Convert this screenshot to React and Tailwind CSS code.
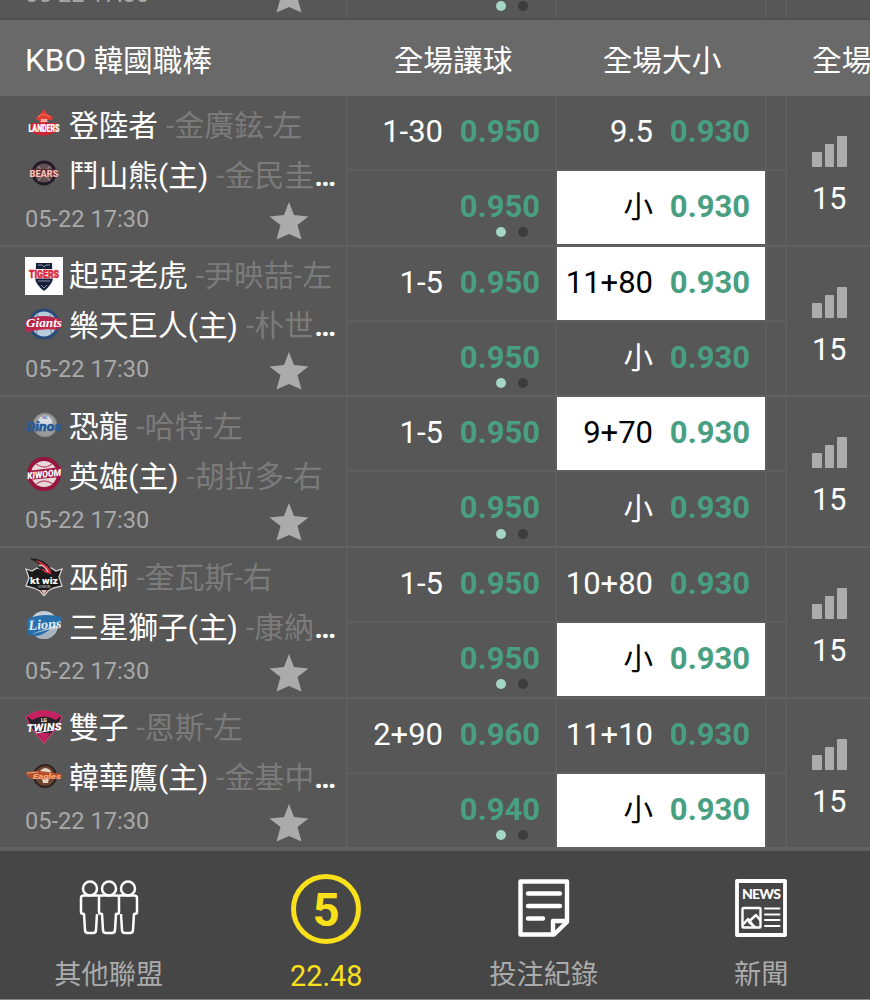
const games = [
    {
        away: { logo: LandersLogo, name: '登陸者', pitcher: '-金廣鉉-左' },
        home: { logo: BearsLogo, name: '鬥山熊(主)', pitcher: '-金民圭', more: true },
        spread: ['1-30', '0.950', '0.950'],
        total: ['9.5', '0.930', '0.930'],
        active: 'under'
    },
    {
        away: { logo: TigersLogo, name: '起亞老虎', pitcher: '-尹映喆-左' },
        home: { logo: GiantsLogo, name: '樂天巨人(主)', pitcher: '-朴世', more: true },
        spread: ['1-5', '0.950', '0.950'],
        total: ['11+80', '0.930', '0.930'],
        active: 'over'
    },
    {
        away: { logo: DinosLogo, name: '恐龍', pitcher: '-哈特-左' },
        home: { logo: KiwoomLogo, name: '英雄(主)', pitcher: '-胡拉多-右' },
        spread: ['1-5', '0.950', '0.950'],
        total: ['9+70', '0.930', '0.930'],
        active: 'over'
    },
    {
        away: { logo: WizLogo, name: '巫師', pitcher: '-奎瓦斯-右' },
        home: { logo: LionsLogo, name: '三星獅子(主)', pitcher: '-康納', more: true },
        spread: ['1-5', '0.950', '0.950'],
        total: ['10+80', '0.930', '0.930'],
        active: 'under'
    },
    {
        away: { logo: TwinsLogo, name: '雙子', pitcher: '-恩斯-左' },
        home: { logo: EaglesLogo, name: '韓華鷹(主)', pitcher: '-金基中', more: true },
        spread: ['2+90', '0.960', '0.940'],
        total: ['11+10', '0.930', '0.930'],
        active: 'under'
    }
];

const logoProps = { width: 38, height: 38, viewBox: '0 0 38 38', className: 'shrink-0' };

function LandersLogo() {
    return (
        <svg {...logoProps}>
            <path d="M10 13 Q14 10 16 7 L19 3 L21 7 L28 11 L27 14 L22 14 L21 18 H15 L14 14Z" fill="#e23b31" />
            <path d="M13 11 Q18 6 25 11" stroke="#f07d50" strokeWidth="1.2" fill="none" />
            <path d="M6 17 H32 V26 L26 28 Q19 31 11 28 L6 26Z" fill="#cf2434" />
            <text x="19" y="16" textAnchor="middle" fontSize="3.5" fontWeight="700" fill="#fff">SSG</text>
            <text x="19" y="26" textAnchor="middle" textLength="31" lengthAdjust="spacingAndGlyphs" fontSize="10" fontWeight="900" fill="#fff" stroke="#fff" strokeWidth=".2">LANDERS</text>
        </svg>
    );
}

function BearsLogo() {
    return (
        <svg {...logoProps}>
            <circle cx="19" cy="17" r="11" fill="#5f5053" stroke="#231a27" strokeWidth="3" />
            <path d="M13 10 L25 25 M25 10 L13 25" stroke="#8d7779" strokeWidth="1.5" />
            <rect x="5" y="13" width="28" height="8" fill="#5a3038" />
            <text x="19" y="20.5" textAnchor="middle" textLength="29" lengthAdjust="spacingAndGlyphs" fontSize="9.5" fontWeight="900" fill="#f7bdb6">BEARS</text>
        </svg>
    );
}

function TigersLogo() {
    return (
        <svg {...logoProps}>
            <rect width="38" height="38" fill="#fff" />
            <path d="M11 6 H27 V9 L28 20 Q28 27 19 34 Q10 27 10 20 L11 9Z" fill="#15213b" />
            <path d="M13 8 H17 L19 10 L21 8 H25" stroke="#8b92a5" fill="none" />
            <rect x="3" y="12" width="32" height="9.5" fill="#fff" />
            <text x="19" y="20.5" textAnchor="middle" textLength="30" lengthAdjust="spacingAndGlyphs" fontSize="10" fontWeight="900" fill="#dc2439" stroke="#dc2439" strokeWidth=".4">TIGERS</text>
            <path d="M13 24 H25 M16 28 L19 31 L22 28" stroke="#8b92a5" fill="none" />
        </svg>
    );
}

function GiantsLogo() {
    return (
        <svg {...logoProps}>
            <circle cx="19" cy="17" r="14" fill="#b7cbdd" stroke="#284b78" strokeWidth="3" />
            <path d="M12 6 Q16 17 11 27 M26 6 Q22 17 27 27" stroke="#73849c" fill="none" />
            <path d="M1 13 Q18 5 37 13 L36 21 Q18 20 1 25Z" fill="#b5234a" />
            <text x="19" y="20" textAnchor="middle" textLength="36" lengthAdjust="spacingAndGlyphs" fontFamily="Liberation Serif" fontStyle="italic" fontSize="13.5" fontWeight="700" fill="#fff">Giants</text>
            <path d="M2 24 Q19 20 32 22" stroke="#c52a4e" strokeWidth="2" fill="none" />
        </svg>
    );
}

function DinosLogo() {
    return (
        <svg {...logoProps}>
            <circle cx="20" cy="18" r="12" fill="#9c9b9b" stroke="#7f7d7b" />
            <circle cx="20" cy="16" r="7.5" fill="#d8dbdf" />
            <text x="20" y="11.5" textAnchor="middle" fontSize="4" fontWeight="700" fill="#4874a5">NC</text>
            <text x="19" y="23.5" textAnchor="middle" textLength="35" lengthAdjust="spacingAndGlyphs" fontStyle="italic" fontSize="13" fontWeight="900" fill="#2a5a97" stroke="#2a5a97" strokeWidth=".5">Dinos</text>
        </svg>
    );
}

function KiwoomLogo() {
    return (
        <svg {...logoProps}>
            <circle cx="19" cy="17" r="15" fill="#e7d8dd" stroke="#97143c" strokeWidth="4" />
            <path d="M11 7 Q20 13 27 7 M11 27 Q19 21 28 27" stroke="#c46078" fill="none" strokeWidth="1.5" />
            <path d="M2 14 L36 10 V20 L3 23Z" fill="#a31542" />
            <text x="19" y="20.5" transform="rotate(-6 19 17)" textAnchor="middle" textLength="34" lengthAdjust="spacingAndGlyphs" fontStyle="italic" fontSize="9.5" fontWeight="900" fill="#fff">KIWOOM</text>
        </svg>
    );
}

function WizLogo() {
    return (
        <svg {...logoProps}>
            <path d="M1 11 L7 13 L12 10 L19 12 L26 10 L31 13 L37 11 L34 19 L37 28 L28 30 L23 33 L19 38 L15 33 L9 30 L1 28 L4 20Z" fill="#19181b" stroke="#d5d1cf" strokeWidth="1.3" />
            <path d="M6 1 Q19 1 26 12 L27 17 L20 15 L13 9 L19 11 Q14 4 6 1Z" fill="#dc3040" stroke="#202022" strokeWidth="1.3" />
            <path d="M14 7 Q20 7 23 14" stroke="#fff" fill="none" />
            <text x="19" y="25.5" textAnchor="middle" textLength="28" lengthAdjust="spacingAndGlyphs" fontSize="9" fontWeight="900" fill="#fff">kt wiz</text>
            <text x="19" y="30" textAnchor="middle" fontSize="3.5" fill="#ddd">SUWON</text>
            <path d="M16 32 H22 L19 37Z" fill="#e7b2af" />
        </svg>
    );
}

function LionsLogo() {
    return (
        <svg {...logoProps}>
            <circle cx="19" cy="17" r="14" fill="#c5ced6" />
            <path d="M11 28 Q22 26 32 18 Q30 31 19 31Z" fill="#a5b1bd" />
            <path d="M2 11 Q18 4 37 9 L35 17 Q28 17 24 20 L3 27Z" fill="#2870ad" />
            <text x="20" y="21" textAnchor="middle" textLength="33" lengthAdjust="spacingAndGlyphs" transform="rotate(-4 19 17)" fontFamily="Liberation Serif" fontStyle="italic" fontSize="14" fontWeight="700" fill="#e3f1fa">Lions</text>
            <path d="M3 27 L26 21 Q18 27 12 28Z" fill="#2870ad" />
        </svg>
    );
}

function TwinsLogo() {
    return (
        <svg {...logoProps}>
            <path d="M1 8 Q19 -4 37 8 L32 18 L19 34 L6 19Z" fill="#282229" stroke="#d23b73" strokeWidth="1.3" />
            <path d="M2 7 Q19 -4 36 7 L31 11 Q19 4 7 11Z" fill="#c72060" />
            <path d="M12 24 H25 L19 33Z" fill="#c72060" />
            <text x="19" y="13" textAnchor="middle" fontSize="5" fontWeight="700" fill="#fff">LG</text>
            <text x="19" y="22" transform="rotate(-3 19 18)" textAnchor="middle" textLength="35" lengthAdjust="spacingAndGlyphs" fontStyle="italic" fontSize="10.5" fontWeight="900" fill="#fff">TWINS</text>
            <path d="M11 24 L28 21" stroke="#fff" />
        </svg>
    );
}

function EaglesLogo() {
    return (
        <svg {...logoProps}>
            <circle cx="20" cy="17" r="11" fill="#70432f" stroke="#2d2524" strokeWidth="2" />
            <path d="M15 12 Q20 6 26 12 L25 15 L23 24 H18 L16 16Z" fill="#e3d5c6" />
            <path d="M1 13 L15 12 L37 15 L35 20 L7 20 L2 17Z" fill="#b54f2c" />
            <path d="M2 14 L13 13" stroke="#eca184" />
            <text x="22" y="19.5" textAnchor="middle" textLength="28" lengthAdjust="spacingAndGlyphs" fontStyle="italic" fontSize="8" fontWeight="900" fill="#f5a679">Eagles</text>
        </svg>
    );
}

function Star() {
    return (
        <svg width="40" height="38" viewBox="0 0 40 38" className="shrink-0">
            <path d="M20 0 L25 13 L39.5 14.5 L28.5 23 L32.5 37.5 L20 32 L7.5 37.5 L11.5 23 L.5 14.5 L15 13Z" fill="#ababab" />
        </svg>
    );
}

function Dots() {
    return (
        <div className="absolute right-[27px] bottom-[7.5px] flex gap-3">
            <span className="size-[10px] rounded-full bg-[#a5d6c5]" />
            <span className="size-[10px] rounded-full bg-[#3c3c3c]" />
        </div>
    );
}

function Team({ team }) {
    const Logo = team.logo;
    return (
        <div className="flex h-[50px] items-center whitespace-nowrap">
            <Logo />
            <span className="ml-1.5 pt-px">{team.name}</span>
            <span className="ml-2 pt-px tracking-[.2px] text-[#7b7b7b]">{team.pitcher}</span>
            {team.more && <span className="pt-px font-bold">…</span>}
        </div>
    );
}

function Odds({ label, value, active }) {
    return (
        <div className={`flex h-[73px] items-center justify-end pr-[15px] pb-[2px] text-[31px] ${active ? 'bg-white text-black' : ''}`}>
            {label === '小' ? <span className="pt-[3px] text-[29.5px]">{label}</span> : <span>{label}</span>}
            <span className="ml-4 w-[81px] text-right font-bold text-[#489f82]">{value}</span>
        </div>
    );
}

function Game({ game }) {
    return (
        <div className="grid h-[150.7px] shrink-0 grid-cols-[346px_211px_208px_22px_1fr] border-b-2 border-[#616161]">
            <div className="pt-1 pl-[25px]">
                <Team team={game.away} />
                <Team team={game.home} />
                <div className="flex h-9 items-center text-[23.6px] text-[#a9a9a9]">
                    <span className="w-[244px] pt-[3px]">05-22 17:30</span>
                    <div className="pt-[5px]"><Star /></div>
                </div>
            </div>
            <div className="relative border-x-2 border-[#5e5e5e]">
                <Odds label={game.spread[0]} value={game.spread[1]} />
                <div className="h-[2px] bg-[#5e5e5e]" />
                <Odds value={game.spread[2]} />
                <Dots />
            </div>
            <div>
                <Odds label={game.total[0]} value={game.total[1]} active={game.active === 'over'} />
                <div className="h-[2px] bg-[#5e5e5e]" />
                <Odds label="小" value={game.total[2]} active={game.active === 'under'} />
            </div>
            <div className="border-x-2 border-[#5e5e5e] pt-[73px]">
                <div className="h-[2px] bg-[#5e5e5e]" />
            </div>
            <div className="pt-[40px] pl-[25px]">
                <div className="flex items-end gap-[3px]">
                    <span className="h-[15px] w-[9.5px] rounded-[1px] bg-[#acacac]" />
                    <span className="h-[23px] w-[9.5px] rounded-[1px] bg-[#acacac]" />
                    <span className="h-[31px] w-[9.5px] rounded-[1px] bg-[#acacac]" />
                </div>
                <p className="mt-3 text-[30.5px] leading-[40px]">15</p>
            </div>
        </div>
    );
}

// bottom strip of the game that is scrolled under the league header
function PreviousGame() {
    return (
        <div className="flex h-5 flex-col justify-end overflow-hidden border-b-2 border-[#505050]">
            <div className="grid h-[150px] shrink-0 grid-cols-[346px_211px_208px_22px_1fr]">
                <div className="flex items-end pl-[25px] text-[23.6px] text-[#a9a9a9]">
                    <span className="w-[244px] pb-[11px]">05-22 17:30</span>
                    <div className="pb-[5px]"><Star /></div>
                </div>
                <div className="relative border-x-2 border-[#5e5e5e]">
                    <Dots />
                </div>
                <div />
                <div className="border-x-2 border-[#5e5e5e]" />
                <div />
            </div>
        </div>
    );
}

function LeaguesIcon() {
    return (
        <svg width="60" height="56" viewBox="0 0 60 56" fill="none" stroke="#fff" strokeWidth="2.5" strokeLinejoin="round">
            <circle cx="11" cy="8.5" r="7" />
            <circle cx="30" cy="8.5" r="7" />
            <circle cx="49" cy="8.5" r="7" />
            <path d="M20 15.5 H5 Q2 15.5 2 18 V32 Q2 34 5 34 L6 50 Q6 53 9 53 H14 Q17 53 17 50 L18 34" />
            <path d="M22 15.5 H38 Q40 15.5 40 18 V32 Q40 34 37 34 L36 50 Q36 53 33 53 H27 Q24 53 24 50 L23 34 Q20 34 20 32 V18 Q20 15.5 22 15.5Z" />
            <path d="M40 15.5 H55 Q58 15.5 58 18 V32 Q58 34 55 34 L54 50 Q54 53 51 53 H46 Q43 53 43 50 L42 34" />
        </svg>
    );
}

function RecordIcon() {
    return (
        <svg width="52" height="58" viewBox="0 0 52 58" fill="none" stroke="#fff" strokeWidth="4.4" strokeLinejoin="round" strokeLinecap="round">
            <path d="M2.5 2.5 H49 V43 L36 55.5 H2.5Z" />
            <path d="M35 55 V42 H48" />
            <path d="M10 14.5 H42 M10 27 H42 M10 39.5 H25" />
        </svg>
    );
}

function NewsIcon() {
    return (
        <svg width="52" height="58" viewBox="0 0 52 58" fill="none" stroke="#fff" strokeWidth="2.4" strokeLinejoin="round" strokeLinecap="round">
            <rect x="2" y="2" width="48" height="54" strokeWidth="3.8" />
            <text x="26.5" y="20" textAnchor="middle" textLength="39" fontFamily="Lato" fontSize="14" fontWeight="900" fill="#fff" stroke="none">NEWS</text>
            <rect x="7.5" y="29" width="18" height="19.5" rx="1" />
            <path d="M8.5 45 L13 40 L17 45 M14.5 42 L21 36 L25 41 M14 43 L20 48" />
            <path d="M30 29.5 H44.5 M30 35.5 H44.5 M30 41 H44.5 M30 47 H44.5" strokeWidth="2" />
        </svg>
    );
}

function NavItem({ label, children, active }) {
    return (
        <div className={`flex flex-col items-center ${active ? 'text-[28.8px] text-[#f9e01b]' : 'text-[27.2px] text-[#ababab]'}`}>
            <div className="mt-[22px] flex h-[70px] items-center justify-center">{children}</div>
            <span className={active ? 'mt-[13px] leading-[40px]' : 'mt-[12px] leading-[40px]'}>{label}</span>
        </div>
    );
}

export default function App() {
    return (
        <div lang="zh-Hant" className="flex h-[1000px] w-[870px] flex-col overflow-hidden bg-[#575757] font-[Roboto,'Noto_Sans_CJK_TC',sans-serif] text-[29.7px] leading-none text-white">
            <PreviousGame />

            <div className="grid h-[76px] shrink-0 grid-cols-[348px_210px_208px_21px_1fr] items-center bg-[#696969] whitespace-nowrap">
                <span className="pt-[5px] pl-[25px]"><span className="text-[31.5px]">KBO</span> 韓國職棒</span>
                <span className="pt-[6px] text-center">全場讓球</span>
                <span className="pt-[6px] text-center">全場大小</span>
                <span />
                <span className="overflow-hidden pt-[6px] pl-[25px]">全場讓球</span>
            </div>

            {games.map((game) => (
                <Game key={game.away.name} game={game} />
            ))}

            <div className="grid min-h-0 grow grid-cols-4 border-t-2 border-b border-t-[#606060] border-b-[#858585] bg-[#464646]">
                <NavItem label="其他聯盟"><LeaguesIcon /></NavItem>
                <NavItem label="22.48" active>
                    <span className="mt-[2px] flex size-[70px] shrink-0 items-center justify-center rounded-full border-[5px] border-[#f9e01b] text-[47px] font-bold">5</span>
                </NavItem>
                <NavItem label="投注紀錄"><RecordIcon /></NavItem>
                <NavItem label="新聞"><NewsIcon /></NavItem>
            </div>
        </div>
    );
}
